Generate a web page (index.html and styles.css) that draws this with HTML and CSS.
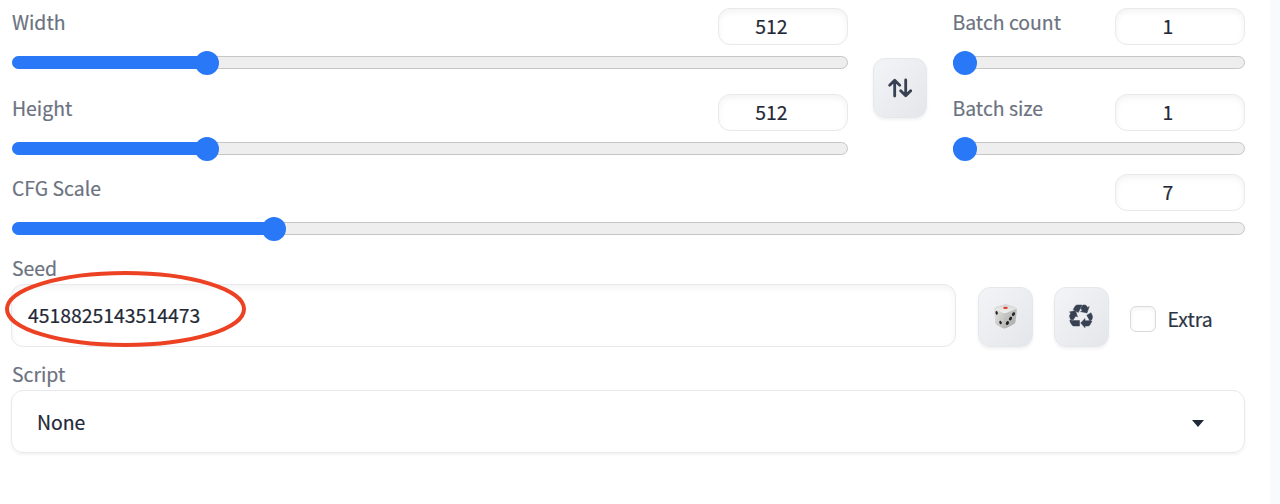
FILE: index.html
```html
<!DOCTYPE html>
<html lang="en">
<head>
    <meta charset="UTF-8">
    <title>Generation settings</title>
    <link rel="stylesheet" href="styles.css">
</head>
<body>
    <div class="panel">
        <div class="size-row">
            <div class="sliders">
                <div class="slider">
                    <div class="head"><label for="width">Width</label><input class="number" id="width" value="512"></div>
                    <div class="range"><div class="fill" style="width: 195px"></div><div class="thumb"></div></div>
                </div>
                <div class="slider">
                    <div class="head"><label for="height">Height</label><input class="number" id="height" value="512"></div>
                    <div class="range"><div class="fill" style="width: 195px"></div><div class="thumb"></div></div>
                </div>
            </div>
            <button class="tool swap">
                <svg width="24" height="20" viewBox="0 0 24 20" fill="none" stroke="#374151" stroke-width="2.800" stroke-linecap="round" stroke-linejoin="round">
                    <path d="M6.700 18V2.500M1.700 7.200l5-5 5 5M17.700 2V17.500M12.700 12.800l5 5 5-5"/>
                </svg>
            </button>
            <div class="sliders batch">
                <div class="slider">
                    <div class="head"><label for="count">Batch count</label><input class="number" id="count" value="1"></div>
                    <div class="range"><div class="fill" style="width: 12px"></div><div class="thumb"></div></div>
                </div>
                <div class="slider">
                    <div class="head"><label for="size">Batch size</label><input class="number" id="size" value="1"></div>
                    <div class="range"><div class="fill" style="width: 12px"></div><div class="thumb"></div></div>
                </div>
            </div>
        </div>
        <div class="slider cfg">
            <div class="head"><label for="cfg">CFG Scale</label><input class="number" id="cfg" value="7"></div>
            <div class="range"><div class="fill" style="width: 262px"></div><div class="thumb"></div></div>
        </div>
        <div class="seed-row">
            <div class="seed">
                <label class="title" for="seed">Seed</label>
                <input class="seed-input" id="seed" value="4518825143514473">
                <svg class="mark" width="244" height="80" viewBox="0 0 244 80">
                    <ellipse cx="121.500" cy="40" rx="118.500" ry="36" fill="none" stroke="#ed4123" stroke-width="4"/>
                </svg>
            </div>
            <button class="tool">
                <svg width="25" height="25" viewBox="0 0 26 26">
                    <defs>
                        <linearGradient id="top" x1="0" y1="0" x2="0" y2="1"><stop offset="0" stop-color="#d6d6d5"/><stop offset="1" stop-color="#f0f0ef"/></linearGradient>
                        <linearGradient id="left" x1="0" y1="0" x2="1" y2="1"><stop offset="0" stop-color="#e2e2e0"/><stop offset="1" stop-color="#bcbdbb"/></linearGradient>
                        <linearGradient id="right" x1="0" y1="0" x2="1" y2="1"><stop offset="0" stop-color="#dcdcda"/><stop offset="1" stop-color="#a8a9a7"/></linearGradient>
                    </defs>
                    <path d="M1.500 5Q1 3.500 3 3L11 .8Q13 .3 15 .8L23 3.500Q25.300 4.500 24.700 7L23.500 18Q23.300 20 21.500 21L14 25Q12 26 10 25L4 21.500Q2.500 20.500 2.300 18.500Z" fill="url(#right)"/>
                    <path d="M1.500 5L11.500 9.500 11.300 25.300Q10.500 25.300 10 25L4 21.500Q2.500 20.500 2.300 18.500Z" fill="url(#left)"/>
                    <path d="M1.500 5Q1.300 3.500 3 3L11 .8Q13 .3 15 .8L23 3.500Q24.500 4 24.500 5L14 9.200Q11.500 9.800 9.500 8.800Z" fill="url(#top)"/>
                    <ellipse cx="13" cy="4.100" rx="2.400" ry="1.200" fill="#e8362f"/>
                    <g fill="#222">
                        <ellipse cx="3.800" cy="9.200" rx="1.200" ry="1.900" transform="rotate(-15 3.800 9.200)"/>
                        <ellipse cx="7.800" cy="19.200" rx="1.200" ry="1.900" transform="rotate(-15 7.800 19.200)"/>
                        <ellipse cx="21.300" cy="10.500" rx="1.500" ry="2.100" transform="rotate(30 21.300 10.500)"/>
                        <ellipse cx="18.200" cy="15.200" rx="1.500" ry="2.100" transform="rotate(30 18.200 15.200)"/>
                        <ellipse cx="15" cy="19.800" rx="1.500" ry="2.100" transform="rotate(30 15 19.800)"/>
                    </g>
                </svg>
            </button>
            <button class="tool recycle">
                <svg width="24" height="24" viewBox="0 0 24 24" fill="#374151" stroke="#374151" stroke-width=".5">
                    <path d="M8.200 1H13L9.300 8.400 4.200 5.600 6.300 2Q7 1 8.200 1Z"/>
                    <path d="M13.800 1H16Q17 1 17.600 2L18.500 3.600 20.200 2.600 18 9 11.500 7.600 13.200 6.600 11.800 4.200Z"/>
                    <path d="M17.800 11.200L22 8.800 23.200 11.500Q23.800 13 23.200 14.400L22.600 16Q22 16.600 20.700 16.600Z"/>
                    <path d="M22.900 17.300L20.800 21Q20.200 22 19 22H16V23.700L11.700 19 16 14.400V16.700H21Q22.200 16.700 22.900 17.300Z"/>
                    <path d="M2.800 16.600H10.500V22H4.900Q3.700 22 3 21L1.200 18Q.6 16.800 1.200 15.800Z"/>
                    <path d="M1.500 15.100L.8 13.300Q.3 12.200.8 11L1.900 9 .4 8 6.500 6.600 8.500 12.900 6.700 11.900 4.300 15.700H2.200Z"/>
                </svg>
            </button>
            <label class="extra"><input type="checkbox">Extra</label>
        </div>
        <div class="script">
            <span class="title">Script</span>
            <div class="select">
                <span>None</span>
                <div class="arrow"></div>
            </div>
        </div>
    </div>
</body>
</html>
```
FILE: styles.css
```css
* {
    box-sizing: border-box;
}
body {
    margin: 0;
    height: 504px;
    overflow: hidden;
    background-color: #f9fafb;
    color: #1f2937;
    font: 19.4px/28px "Noto Sans CJK SC", sans-serif;
    -webkit-text-stroke: .2px;
}
.panel {
    width: 1269.5px;
    height: 504px;
    padding: 8px 25px 0 11px;
    background-color: #fff;
}
label, .title {
    color: #6b7280;
}
input, button {
    margin: 0;
    font: inherit;
    color: inherit;
}
.size-row {
    display: flex;
}
.sliders {
    display: flex;
    flex-direction: column;
    gap: 19px;
    width: 837px;
}
.batch {
    width: 293px;
    margin-left: 24.5px;
}
.head {
    display: flex;
    justify-content: space-between;
    align-items: flex-start;
    height: 43px;
    padding-left: 1px;
}
.number {
    width: 130px;
    height: 37px;
    padding: 0 23px 2px 0;
    border: 1px solid #e8e9ec;
    border-radius: 12px;
    text-align: center;
    color: #1f2937;
    background-color: #fff;
    box-shadow: inset 0 3px 6px rgba(0, 0, 0, .05);
}
.range {
    display: flex;
    align-items: center;
    height: 13px;
    margin: 5px 0 6px 1px;
    border: 1px solid #c6c6c6;
    border-radius: 7px;
    background-color: #eee;
}
.fill {
    height: 13px;
    margin-left: -1px;
    border-radius: 7px 0 0 7px;
    background-color: #2878f8;
}
.thumb {
    flex: none;
    width: 24px;
    height: 24px;
    margin-left: -12px;
    border-radius: 50%;
    background-color: #2878f8;
}
.tool {
    display: flex;
    justify-content: center;
    align-items: center;
    flex: none;
    width: 55px;
    height: 60px;
    padding: 0 0 2px;
    border: 1px solid #e5e7eb;
    border-radius: 12px;
    background: linear-gradient(to bottom right, #f3f4f6, #e5e6eb);
    box-shadow: 0 2px 3px rgba(0, 0, 0, .06);
}
.swap {
    width: 54px;
    margin: 50px 0 0 25px;
    padding: 0;
}
.cfg {
    margin-top: 13px;
}
.seed-row {
    display: flex;
    align-items: flex-end;
    height: 106px;
}
.seed {
    position: relative;
    width: 944.5px;
    margin-right: 22px;
}
.title {
    display: block;
    height: 30px;
    padding-left: 1px;
}
.seed-input {
    display: block;
    width: 100%;
    height: 63px;
    padding: 0 16px 2px;
    border: 1px solid #e8e9ec;
    border-radius: 12px;
    box-shadow: inset 0 3px 6px rgba(0, 0, 0, .05);
}
.mark {
    position: absolute;
    left: -7px;
    top: 15px;
}
.recycle {
    margin-left: 21px;
}
.extra {
    display: flex;
    align-items: center;
    gap: 12px;
    margin: 0 0 14px 21px;
    color: #2b3544;
}
.extra input {
    appearance: none;
    width: 26px;
    height: 26px;
    border: 1px solid #d8dade;
    border-radius: 6px;
    box-shadow: inset 0 2px 4px rgba(0, 0, 0, .05);
}
.script {
    margin-top: 13px;
}
.select {
    display: flex;
    align-items: center;
    justify-content: space-between;
    height: 63px;
    padding: 0 40px 0 25px;
    border: 1px solid #e8e9ec;
    border-radius: 12px;
    box-shadow: 0 2px 3px rgba(0, 0, 0, .05);
}
.arrow {
    margin-top: 3px;
    border: 6.5px solid transparent;
    border-top: 7px solid #1f2937;
    border-bottom: 0;
}
```
